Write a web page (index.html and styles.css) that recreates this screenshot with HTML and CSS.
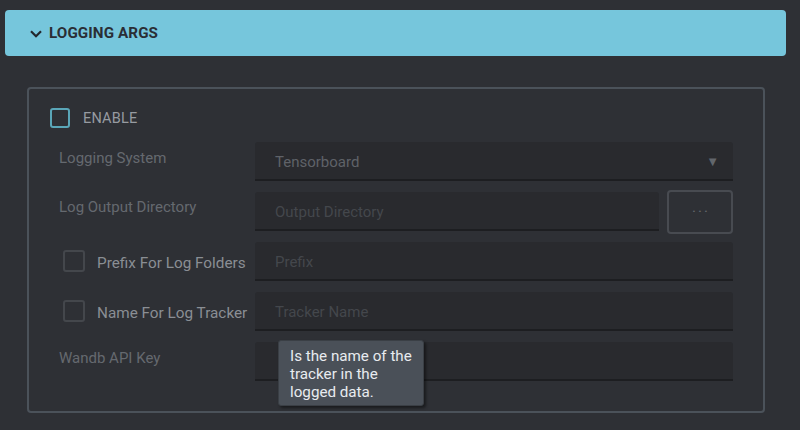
FILE: index.html
```html
<!DOCTYPE html>
<html>
<head>
<meta charset="utf-8">
<link rel="stylesheet" href="styles.css">
</head>
<body>
<div class="header">
  <svg class="chev" width="12" height="8" viewBox="0 0 12 8"><path d="M1 1.2 L6 6.2 L11 1.2" fill="none" stroke="#23272d" stroke-width="2.2"/></svg>
  <span class="title">LOGGING ARGS</span>
</div>
<div class="panel">
  <div class="enable">
    <span class="cb cb-teal"></span>
    <span class="enable-label">ENABLE</span>
  </div>
  <div class="form">
    <div class="label dim">Logging System</div>
    <div class="field select"><span class="value">Tensorboard</span><span class="arrow">&#9660;</span></div>

    <div class="label dim lower">Log Output Directory</div>
    <div class="field-row">
      <div class="field"><span class="ph">Output Directory</span></div>
      <div class="btn">&middot;&middot;&middot;</div>
    </div>

    <div class="label check"><span class="cb"></span><span>Prefix For Log Folders</span></div>
    <div class="field"><span class="ph">Prefix</span></div>

    <div class="label check"><span class="cb"></span><span>Name For Log Tracker</span></div>
    <div class="field"><span class="ph">Tracker Name</span></div>

    <div class="label dim">Wandb API Key</div>
    <div class="field tip-host">
      <div class="tooltip">Is the name of the<br>tracker in the<br>logged data.</div>
    </div>
  </div>
</div>
</body>
</html>
```
FILE: styles.css
```css
html, body {
  margin: 0;
  padding: 0;
  background: #2e3035;
  font-family: Roboto, "Noto Sans", sans-serif;
  width: 800px;
  height: 430px;
  overflow: hidden;
}
.header {
  margin: 10px 14px 0 5px;
  height: 46px;
  background: #76c6dc;
  border-radius: 4px;
  display: flex;
  align-items: center;
  padding-left: 25px;
  box-sizing: border-box;
}
.chev { margin-right: 7px; margin-top: 1px; }
.title {
  font-size: 15.2px;
  font-weight: 700;
  color: #2a2e35;
  letter-spacing: 0.1px;
}
.panel {
  margin: 31px 0 0 27px;
  width: 738px;
  height: 326px;
  box-sizing: border-box;
  border: 2px solid #4b525a;
  border-radius: 4px;
  padding: 19px 30px 0 21px;
}
.enable {
  display: flex;
  align-items: center;
  height: 20px;
}
.cb {
  width: 22px;
  height: 22px;
  box-sizing: border-box;
  border: 2px solid #44474c;
  border-radius: 3px;
  flex: none;
}
.cb-teal {
  width: 20px;
  height: 20px;
  border-color: #5aa6b8;
}
.enable-label {
  margin-left: 13px;
  font-size: 14.5px;
  color: #979ba1;
  letter-spacing: 0.2px;
}
.form {
  margin: 14px 0 0 9px;
  display: grid;
  grid-template-columns: 196px 1fr;
  grid-auto-rows: 39px;
  row-gap: 11px;
}
.label {
  display: flex;
  align-items: center;
  font-size: 15px;
  padding-bottom: 7px;
}
.label.lower { padding-bottom: 10px; }
.dim { color: #65696f; }
.check {
  color: #8a8e94;
  padding-left: 4px;
  padding-bottom: 0;
  font-size: 15.3px;
}
.check .cb { margin-right: 12px; margin-top: -2px; }
.check span:last-child { margin-top: 2px; }
.field {
  background: #292a2e;
  border-bottom: 2px solid #1d1e21;
  border-radius: 3px 3px 0 0;
  box-sizing: border-box;
  display: flex;
  align-items: center;
  padding-left: 20px;
  padding-top: 2px;
  font-size: 15px;
  position: relative;
}
.select { justify-content: space-between; padding-right: 14px; }
.value { color: #5f6268; }
.arrow { color: #62666c; font-size: 13px; }
.ph { color: #44474c; }
.field-row {
  display: flex;
  gap: 8px;
}
.field-row .field { flex: 1; }
.btn {
  width: 66px;
  height: 44px;
  margin-top: -2px;
  box-sizing: border-box;
  border: 2px solid #484b51;
  border-radius: 4px;
  color: #64686e;
  font-size: 15px;
  display: flex;
  align-items: center;
  justify-content: center;
  letter-spacing: 2px;
  padding-left: 2px;
}
.tooltip {
  position: absolute;
  left: 23px;
  top: -2px;
  width: 146px;
  height: 66px;
  box-sizing: border-box;
  background: #4a5058;
  border: 1px solid #3a3f45;
  border-radius: 3px;
  padding: 6px 11px;
  color: #e8ebef;
  font-size: 15.2px;
  line-height: 18px;
  box-shadow: 2px 2px 3px rgba(0,0,0,0.45);
}
```
